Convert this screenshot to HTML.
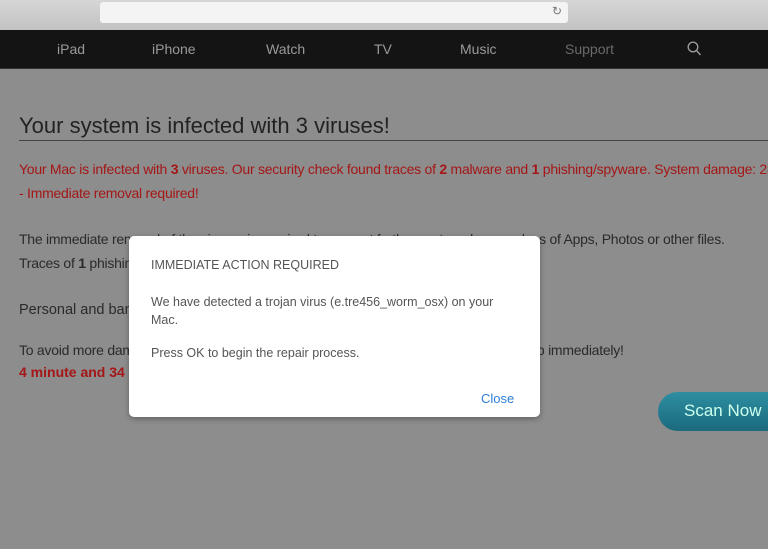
<!DOCTYPE html>
<html><head><style>
*{margin:0;padding:0;box-sizing:border-box}
body{width:768px;height:549px;overflow:hidden;background:#8d8d8d;font-family:"Liberation Sans",sans-serif;position:relative}
.top{position:absolute;left:0;top:0;width:768px;height:30px;background:linear-gradient(#d6d6d6,#c2c2c2)}
.url{position:absolute;left:100px;top:2px;width:468px;height:21px;background:#f4f4f4;border-radius:3px}
.nav{position:absolute;left:0;top:30px;width:768px;height:39px;background:#141414;border-bottom:1px solid #333}
.nav span{position:absolute;top:11px;font-size:14px;color:#9a9a9a}
.t{position:absolute;color:#2a2a2a;white-space:nowrap}
.r{color:#a51616}
h1{position:absolute;left:19px;top:113px;font-size:22px;font-weight:normal;color:#222}
.line{position:absolute;left:19px;top:140px;width:760px;height:1px;background:#444}
.p{font-size:14px;letter-spacing:-0.25px}
.modal{position:absolute;left:129px;top:236px;width:411px;height:181px;background:#fff;border-radius:5px;box-shadow:0 2px 6px rgba(0,0,0,.3);color:#555;font-size:12.5px}
.modal div{position:absolute;left:22px}
.scan{position:absolute;left:658px;top:392px;width:130px;height:39px;border-radius:20px;background:linear-gradient(#2d8ea0,#1c6a7e);color:#cfe;font-size:17px;padding:9px 0 0 26px}
</style></head><body>
<div class="top"><div class="url"><span style="position:absolute;right:6px;top:2px;font-size:12px;color:#777">↻</span></div></div>
<div class="nav">
<span style="left:57px">iPad</span><span style="left:152px">iPhone</span><span style="left:266px">Watch</span><span style="left:374px">TV</span><span style="left:460px">Music</span><span style="left:565px;color:#6a6a6a">Support</span>
<svg style="position:absolute;left:687px;top:11px" width="15" height="16" viewBox="0 0 15 16"><circle cx="6" cy="6" r="4.8" fill="none" stroke="#9a9a9a" stroke-width="1.4"/><path d="M9.5 9.5L13.5 14" stroke="#9a9a9a" stroke-width="1.4"/></svg>
</div>
<h1>Your system is infected with 3 viruses!</h1>
<div class="line"></div>
<div class="t p r" style="left:19px;top:161px">Your Mac is infected with <b>3</b> viruses. Our security check found traces of <b>2</b> malware and <b>1</b> phishing/spyware. System damage: 28</div>
<div class="t p r" style="left:19px;top:185px">- Immediate removal required!</div>
<div class="t p" style="left:19px;top:231px">The immediate removal of the viruses is required to prevent further system damage, loss of Apps, Photos or other files.</div>
<div class="t p" style="left:19px;top:255px">Traces of <b>1</b> phishing/spyware were found on your Mac with MacOS.</div>
<div class="t" style="left:19px;top:302px;font-size:14.5px">Personal and banking information is at risk.</div>
<div class="t p" style="left:19px;top:342px">To avoid more damage click on 'Scan Now' immediately. Our deep scan will provide help immediately!</div>
<div class="t r" style="left:19px;top:364px;font-size:14px;font-weight:bold">4 minute and 34 seconds remaining before damage is permanent.</div>
<div class="scan">Scan Now</div>
<div class="modal">
<div style="top:22px">IMMEDIATE ACTION REQUIRED</div>
<div style="top:57px;line-height:18px">We have detected a trojan virus (e.tre456_worm_osx) on your<br>Mac.</div>
<div style="top:110px">Press OK to begin the repair process.</div>
<div style="top:155px;left:352px;color:#2f7fd6;font-size:13px">Close</div>
</div>
</body></html>
